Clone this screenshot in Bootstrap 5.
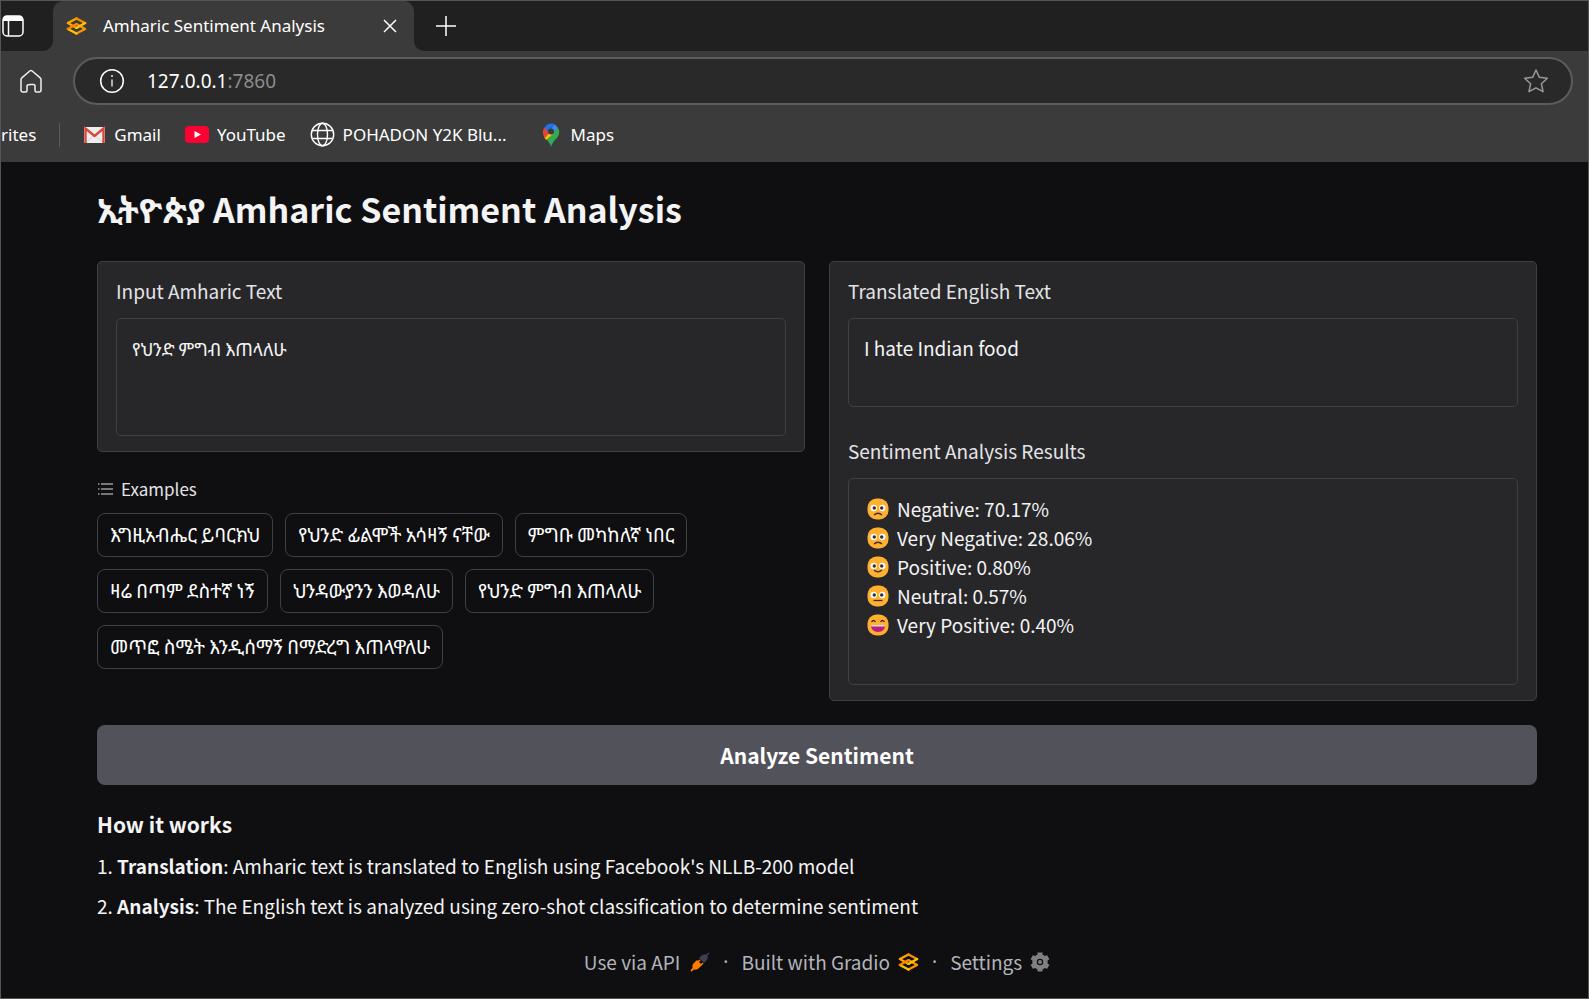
<!DOCTYPE html>
<html lang="en">
<head>
<meta charset="utf-8">
<meta name="viewport" content="width=device-width, initial-scale=1">
<title>Amharic Sentiment Analysis</title>
<link href="https://cdn.jsdelivr.net/npm/bootstrap@5.3.0/dist/css/bootstrap.min.css" rel="stylesheet">
<style>
  :root { --line: #3f3f46; --panel: #27272a; --chrome: #3b3b3b; --strip: #202020; }
  body { background: #0f0f11; color: #f4f4f5; font-family: "Noto Sans CJK SC", "Noto Sans Ethiopic", sans-serif; font-size: 19px; line-height: 30px; }
  svg { display: block; flex: none; }
  .window-frame { border: 1px solid #555; overflow: hidden; }
  /* browser chrome */
  .chrome { background: var(--chrome); color: #fff; font-family: "Noto Sans", sans-serif; font-size: 17px; line-height: 24px; }
  .chrome button { background: none; border: 0; padding: 0; color: inherit; }
  .chrome a { color: inherit; text-decoration: none; white-space: nowrap; }
  .strip-start { width: 52px; height: 50px; background: var(--strip); border-bottom-right-radius: 10px; }
  .strip-end { background: var(--strip); border-bottom-left-radius: 10px; padding-left: 21px; }
  .tab-back { width: 361px; background: linear-gradient(var(--strip) 50%, var(--chrome) 50%); }
  .tab-front { background: var(--chrome); border-radius: 10px 10px 0 0; padding: 0 17px 0 13px; }
  .toolbar-row { padding: 6px 15px 6px 18px; gap: 30px; }
  .address { height: 48px; background: #292929; border: 2px solid #5c5c5c; border-radius: 24px; padding: 0 22px 0 24px; gap: 22px; font-size: 19px; }
  .port { color: #8c8c8c; }
  .favorites { height: 51px; padding-bottom: 4px; }
  .favorites a { gap: 8px; }
  .fav-rule { width: 1px; height: 24px; background: #5c5c5c; margin: 0 23px; }
  /* application */
  .app-body { padding: 27px 51px 19px 96px; }
  .app-title { font-size: 34px; line-height: 40px; font-weight: 700; margin: 0 0 32px; }
  .cols { display: grid; grid-template-columns: 1fr 1fr; gap: 24px; }
  .panel { background: var(--panel); border: 1px solid var(--line); border-radius: 5px; padding: 14px 18px 15px; }
  .panel label, .panel .caption-text { display: block; color: #e4e4e7; margin-bottom: 12px; }
  .field { display: block; width: 100%; background: var(--panel); color: #f4f4f5; border: 1px solid var(--line); border-radius: 5px; padding: 14px 15px; resize: none; outline: 0; margin: 0; }
  .field-tall { height: 118px; font-size: 18px; }
  .field-short { height: 89px; margin-bottom: 29px; }
  .field-results { height: 207px; padding: 15px 18px; list-style: none; }
  .field-results li { display: flex; align-items: center; gap: 8px; line-height: 29px; }
  .examples-label { font-size: 17px; color: #e4e4e7; line-height: 24px; margin: 25px 0 12px; }
  .samples { gap: 12px; }
  .sample { background: transparent; color: #fff; border: 1px solid var(--line); border-radius: 8px; padding: 5px 12px 7px; white-space: nowrap; }
  .run-btn { background: #52525b; color: #fff; border: 0; border-radius: 8px; height: 60px; font-size: 21px; font-weight: 700; margin: 24px 0 23px; }
  .how-title { font-size: 21px; line-height: 32px; font-weight: 700; margin: 0 0 11px; }
  .how-list { list-style-position: inside; padding: 0; margin: 0 0 26px; }
  .how-list li { margin-bottom: 10px; }
  .foot, .foot a { color: #b4b4bc; text-decoration: none; }
  .foot { gap: 13px; }
  .foot .mid-dot { font-family: "Noto Sans", sans-serif; }
</style>
</head>
<body>
<svg width="0" height="0" class="position-absolute" aria-hidden="true">
  <symbol id="gradio" viewBox="0 0 20 18">
    <g fill="none" stroke-width="2.300" stroke-linecap="round" stroke-linejoin="round">
      <path d="M10 10.900 1.400 6.100 10 1.400" stroke="#ffa800"/>
      <path d="M10 1.400 18.600 6.100" stroke="#ff8a00"/>
      <path d="M10 7.100 18.600 11.900 10 16.600" stroke="#ff9200"/>
      <path d="M10 16.600 1.400 11.900" stroke="#ffc400"/>
      <path d="M1.400 11.900 10 7.100" stroke="#ff8600"/>
      <path d="M18.600 6.100 10 10.900" stroke="#ffc800"/>
    </g>
  </symbol>
  <symbol id="eyes" viewBox="0 0 22 22">
    <rect x=".5" y=".5" width="21" height="21" rx="9" fill="#ffb02e"/>
    <circle cx="6.700" cy="10" r="3.200" fill="#fff"/><circle cx="15.300" cy="10" r="3.200" fill="#fff"/>
    <circle cx="7.300" cy="10" r="1.700" fill="#402a32"/><circle cx="14.700" cy="10" r="1.700" fill="#402a32"/>
  </symbol>
</svg>
<div class="window-frame min-vh-100 d-flex flex-column">
  <header class="chrome">
    <div class="d-flex">
      <div class="strip-start d-flex align-items-center">
        <button aria-label="Tab actions"><svg width="24" height="24" viewBox="0 0 24 24"><rect x="2" y="2" width="20" height="20" rx="4" fill="none" stroke="#fff" stroke-width="1.500"/><path d="M2 7V5q0-3 3-3h14q3 0 3 3v2Z" fill="#fff"/><path d="M7.500 7v15" stroke="#fff" stroke-width="1.500"/></svg></button>
      </div>
      <div class="tab-back d-flex">
        <div class="tab-front d-flex align-items-center flex-fill">
          <svg width="21" height="18"><use href="#gradio"/></svg>
          <span class="ms-3 me-auto text-nowrap">Amharic Sentiment Analysis</span>
          <button aria-label="Close tab"><svg width="14" height="14" viewBox="0 0 14 14"><path d="m1 1 12 12M13 1 1 13" stroke="#fff" stroke-width="1.500"/></svg></button>
        </div>
      </div>
      <div class="strip-end d-flex align-items-center flex-fill">
        <button aria-label="New tab"><svg width="22" height="22" viewBox="0 0 22 22"><path d="M11 1v20M1 11h20" stroke="#fff" stroke-width="1.500"/></svg></button>
      </div>
    </div>
    <div class="toolbar-row d-flex align-items-center">
      <button aria-label="Home"><svg width="24" height="24" viewBox="0 0 24 24"><path d="M2 10.500q0-1 .8-1.600l8-6.900q1.200-1 2.400 0l8 6.900q.8.600.8 1.600V21q0 2-2 2h-2.500q-1.500 0-1.500-1.500V17q0-1.500-1.500-1.500h-3Q8 15.500 8 17v4.500Q8 23 6.500 23H4q-2 0-2-2Z" fill="none" stroke="#f0f0f0" stroke-width="1.500"/></svg></button>
      <div class="address d-flex align-items-center flex-fill">
        <svg width="26" height="26" viewBox="0 0 26 26"><circle cx="13" cy="13" r="11.300" fill="none" stroke="#fff" stroke-width="1.500"/><path d="M13 11.500v7" stroke="#ddd" stroke-width="1.500"/><circle cx="13" cy="8" r="1.100" fill="#ddd"/></svg>
        <span class="me-auto">127.0.0.1<span class="port">:7860</span></span>
        <button aria-label="Add to favorites"><svg width="26" height="26" viewBox="0 0 26 26"><path d="m13 2 3.300 7.300 8 1-5.900 5.400 1.600 8L13 19.800l-7 3.900 1.600-8L1.700 10.300l8-1Z" fill="none" stroke="#9a9a9a" stroke-width="1.500" stroke-linejoin="round"/></svg></button>
      </div>
    </div>
    <nav class="favorites d-flex align-items-center" aria-label="Favorites">
      <a href="#">rites</a>
      <span class="fav-rule"></span>
      <a href="#" class="d-flex align-items-center"><svg width="23" height="18" viewBox="0 0 23 18"><rect x="1" y="1" width="21" height="16" rx="1" fill="#eee"/><path d="m4 16 7.500-7L19 16" fill="none" stroke="#d0d0d0"/><path d="M2.500 17V2.500l9 7.500 9-7.500V17" fill="none" stroke="#d8473a" stroke-width="2.400"/></svg>Gmail</a>
      <a href="#" class="d-flex align-items-center ms-4"><svg width="24" height="17" viewBox="0 0 24 17"><rect width="24" height="17" rx="4" fill="#ff0033"/><path d="m9.500 5 6.500 3.500-6.500 3.500Z" fill="#fff"/></svg>YouTube</a>
      <a href="#" class="d-flex align-items-center ms-4"><svg width="25" height="25" viewBox="0 0 25 25" fill="none" stroke="#fff" stroke-width="1.400"><circle cx="12.500" cy="12.500" r="11.200"/><ellipse cx="12.500" cy="12.500" rx="5" ry="11.200"/><path d="M2.500 8.500h20M2.500 16.500h20"/></svg>POHADON Y2K Blu...</a>
      <a href="#" class="d-flex align-items-center ms-4 ps-2"><svg width="24" height="24" viewBox="0 0 24 24"><path d="M12 24c-1-4-3-6-5-8l11-12c3 3 3 7 0 11-3 3-5 5-6 9Z" fill="#34a853"/><path d="M5 13 9 7l5 4-7 6Q5.500 15.500 5 13Z" fill="#fbbc04"/><path d="M5.500 4.500 11 9l-5 6C3 11 3.500 7 5.500 4.500Z" fill="#ea4335"/><path d="M5.500 4.500Q8 .5 12 .5L15 2 9 9Z" fill="#1a73e8"/><path d="M12 .5q4.500 0 7 4.500L14 9l-3-2 4-5Z" fill="#4285f4"/><circle cx="12" cy="8.500" r="3" fill="#3b3b3b"/></svg>Maps</a>
    </nav>
  </header>

  <main class="app-body flex-fill">
    <h1 class="app-title">ኢትዮጵያ Amharic Sentiment Analysis</h1>
    <div class="cols">
      <section>
        <div class="panel">
          <label for="src">Input Amharic Text</label>
          <textarea id="src" class="field field-tall">የህንድ ምግብ እጠላለሁ</textarea>
        </div>
        <div class="examples-label d-flex align-items-center gap-2"><svg width="16" height="14" viewBox="0 0 16 14"><path d="M4 2h12M4 7h12M4 12h12" stroke="#9a9aa0" stroke-width="1.600"/><path d="M1 2h1.500M1 7h1.500M1 12h1.500" stroke="#9a9aa0" stroke-width="1.600"/></svg>Examples</div>
        <div class="samples d-flex flex-wrap">
          <button class="sample">እግዚአብሔር ይባርክህ</button>
          <button class="sample">የህንድ ፊልሞች አሳዛኝ ናቸው</button>
          <button class="sample">ምግቡ መካከለኛ ነበር</button>
          <button class="sample">ዛሬ በጣም ደስተኛ ነኝ</button>
          <button class="sample">ህንዳውያንን እወዳለሁ</button>
          <button class="sample">የህንድ ምግብ እጠላለሁ</button>
          <button class="sample">መጥፎ ስሜት እንዲሰማኝ በማድረግ እጠላዋለሁ</button>
        </div>
      </section>
      <section class="panel">
        <label for="dst">Translated English Text</label>
        <textarea id="dst" class="field field-short" readonly>I hate Indian food</textarea>
        <span class="caption-text" id="res">Sentiment Analysis Results</span>
        <ul class="field field-results" aria-labelledby="res">
          <li><svg width="22" height="22" viewBox="0 0 22 22"><use href="#eyes"/><path d="M7 17q4-3.500 8 0" fill="none" stroke="#402a32" stroke-width="1.300"/></svg>Negative: 70.17%</li>
          <li><svg width="22" height="22" viewBox="0 0 22 22"><use href="#eyes"/><path d="M7 17q4-3.500 8 0" fill="none" stroke="#402a32" stroke-width="1.300"/></svg>Very Negative: 28.06%</li>
          <li><svg width="22" height="22" viewBox="0 0 22 22"><use href="#eyes"/><path d="M7 14q4 3.500 8 0" fill="none" stroke="#402a32" stroke-width="1.300"/></svg>Positive: 0.80%</li>
          <li><svg width="22" height="22" viewBox="0 0 22 22"><use href="#eyes"/><path d="M6.500 15.500h9" fill="none" stroke="#402a32" stroke-width="1.300"/></svg>Neutral: 0.57%</li>
          <li><svg width="22" height="22" viewBox="0 0 22 22"><rect x=".5" y=".5" width="21" height="21" rx="9" fill="#ffb02e"/><path d="M4.500 8q2-3 4 0M13.500 8q2-3 4 0" fill="none" stroke="#402a32" stroke-width="1.300"/><path d="M4 11h14q0 7-7 7t-7-7Z" fill="#bb1d80"/><path d="M4 11h14l-.4 1.500H4.400Z" fill="#f3d5e6"/></svg>Very Positive: 0.40%</li>
        </ul>
      </section>
    </div>
    <button class="run-btn w-100 d-block">Analyze Sentiment</button>
    <h2 class="how-title">How it works</h2>
    <ol class="how-list">
      <li><strong>Translation</strong>: Amharic text is translated to English using Facebook's NLLB-200 model</li>
      <li><strong>Analysis</strong>: The English text is analyzed using zero-shot classification to determine sentiment</li>
    </ol>
    <footer class="foot d-flex justify-content-center align-items-center">
      <a href="#" class="d-flex align-items-center gap-2">Use via API <svg width="22" height="20" viewBox="-2 0 22 20"><path d="m1 19 3-3" stroke="#ff7c00" stroke-width="1.800"/><path d="M3 17q-2-4 2-7l2-2 5 5-2 2q-3 4-7 2Z" fill="#ff7c00"/><path d="m8 10 2-2M11 13l2-2" stroke="#ff7c00" stroke-width="1.600"/><path d="m9 6 2-2q3-3 6-1 2 3-1 6l-2 2Z" fill="#3c4250"/><path d="m16 4 3-3" stroke="#3c4250" stroke-width="1.600"/></svg></a>
      <span class="mid-dot">·</span>
      <a href="#" class="d-flex align-items-center gap-2">Built with Gradio <svg width="21" height="18"><use href="#gradio"/></svg></a>
      <span class="mid-dot">·</span>
      <a href="#" class="d-flex align-items-center gap-2">Settings <svg width="20" height="20" viewBox="0 0 20 20"><circle cx="10" cy="10" r="5.500" fill="none" stroke="#808080" stroke-width="4.500"/><path d="M10 .5v4M10 15.500v4M1.800 5.200l3.400 2M14.800 12.800l3.400 2M1.800 14.800l3.400-2M14.800 7.200l3.400-2" stroke="#808080" stroke-width="5"/><circle cx="10" cy="10" r="2" fill="#808080"/></svg></a>
    </footer>
  </main>
</div>
<script src="https://cdn.jsdelivr.net/npm/bootstrap@5.3.0/dist/js/bootstrap.bundle.min.js"></script>
</body>
</html>
